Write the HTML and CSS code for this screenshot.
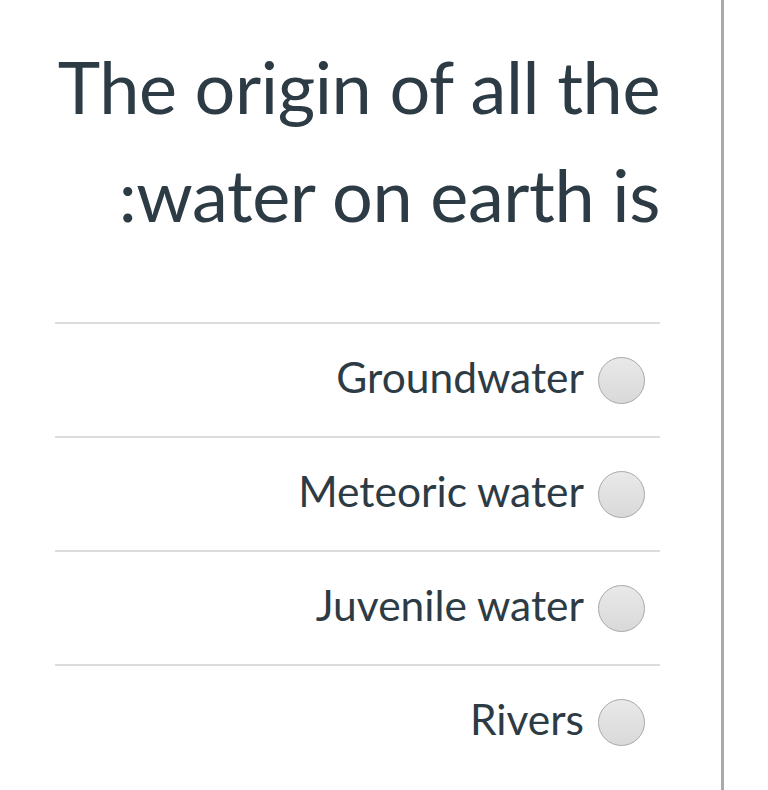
FILE: index.html
```html
<!DOCTYPE html>
<html lang="en">
<head>
<meta charset="utf-8">
<title>Quiz question</title>
<link rel="stylesheet" href="styles.css">
</head>
<body>
<div class="page">
  <div class="question">
    <h1 class="question-text">The origin of all the<br>:water on earth is</h1>
    <ul class="answers">
      <li class="answer"><span class="label">Groundwater</span><span class="radio"></span></li>
      <li class="answer"><span class="label">Meteoric water</span><span class="radio"></span></li>
      <li class="answer"><span class="label">Juvenile water</span><span class="radio"></span></li>
      <li class="answer"><span class="label">Rivers</span><span class="radio"></span></li>
    </ul>
  </div>
</div>
</body>
</html>
```

FILE: styles.css
```css
html, body {
  margin: 0;
  padding: 0;
  background: #ffffff;
}

body {
  font-family: Lato, "Open Sans", sans-serif;
  color: #2d3b45;
}

.page {
  width: 721px;
  min-height: 790px;
  border-right: 3px solid #aaaaaa;
}

.question {
  width: 605px;
  margin-left: 55px;
  padding-top: 32px;
}

.question-text {
  margin: 0 0 74px 0;
  font-size: 72px;
  font-weight: 400;
  line-height: 108px;
  text-align: right;
  white-space: nowrap;
  letter-spacing: -0.4px;
}

.answers {
  list-style: none;
  margin: 0;
  padding: 0;
}

.answer {
  display: flex;
  justify-content: flex-end;
  align-items: center;
  height: 112px;
  border-top: 2px solid #dcdcdc;
  padding-right: 15px;
}

.label {
  font-size: 42.5px;
  line-height: 50px;
  margin-right: 14px;
  margin-bottom: 6px;
}

.radio {
  width: 45px;
  height: 45px;
  border-radius: 50%;
  border: 1px solid #a8a8a8;
  background: linear-gradient(to bottom, #e9e9e9, #d9d9d9);
  flex: none;
}
```
